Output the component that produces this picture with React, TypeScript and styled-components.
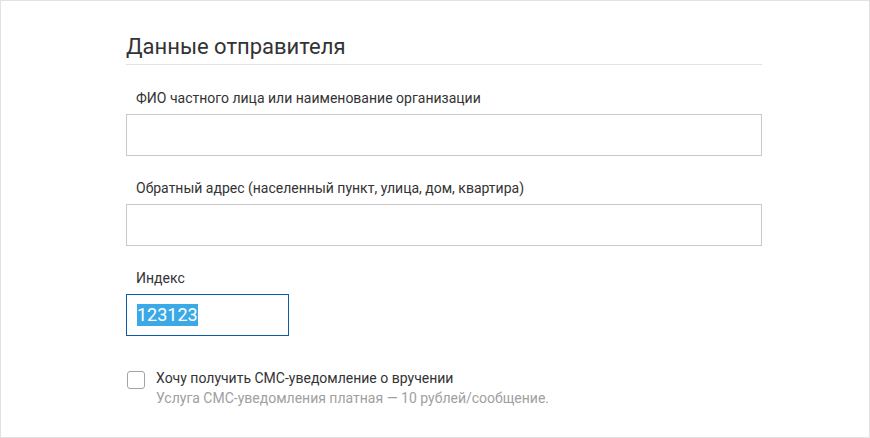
import React from "react";
import styled, { createGlobalStyle } from "styled-components";

const Global = createGlobalStyle`
  html, body { margin: 0; padding: 0; background: #fff; }
  * { box-sizing: border-box; }
  body { font-family: Roboto, "Noto Sans", Arial, sans-serif; color: #333; }
`;

const Frame = styled.div`
  width: 870px;
  height: 438px;
  border: 1px solid #e2e2e2;
  padding: 33px 107px 0 125px;
`;

const Column = styled.div`
  width: 636px;
  display: flex;
  flex-direction: column;
`;

const Heading = styled.h2`
  margin: 0;
  font-size: 22px;
  font-weight: 400;
  line-height: 26px;
  color: #333;
  padding-bottom: 4px;
  border-bottom: 1px solid #e3e3e3;
  margin-bottom: 23px;
`;

const Field = styled.div`
  display: flex;
  flex-direction: column;
  gap: 6px;
  margin-bottom: 22px;
`;

const Label = styled.label`
  font-size: 14px;
  line-height: 20px;
  color: #333;
  padding-left: 10px;
`;

const Input = styled.div<{ $width?: number; $focused?: boolean }>`
  width: ${(p) => (p.$width ? `${p.$width}px` : "100%")};
  height: 42px;
  border: 1px solid ${(p) => (p.$focused ? "#0d5aa7" : "#c9c9c9")};
  padding: 0 10px;
  display: flex;
  align-items: center;
  font-size: 18px;
  color: #333;
`;

const Selected = styled.span`
  background: #3aa9e6;
  color: #fff;
  line-height: 22px;
  display: inline-block;
`;

const CheckRow = styled.label`
  display: flex;
  align-items: flex-start;
  gap: 11px;
  margin-top: 10px;
  padding-left: 1px;
`;

const Box = styled.span`
  width: 18px;
  height: 18px;
  border: 1px solid #a3a3a3;
  border-radius: 3px;
  flex: none;
  margin-top: 3px;
`;

const CheckText = styled.div`
  display: flex;
  flex-direction: column;
  font-size: 14px;
  line-height: 20px;
`;

const Main = styled.span`
  color: #333;
`;

const Hint = styled.span`
  color: #a0a0a0;
`;

export default function App() {
  return (
    <>
      <Global />
      <Frame>
        <Column>
          <Heading>Данные отправителя</Heading>
          <Field>
            <Label>ФИО частного лица или наименование организации</Label>
            <Input />
          </Field>
          <Field>
            <Label>Обратный адрес (населенный пункт, улица, дом, квартира)</Label>
            <Input />
          </Field>
          <Field>
            <Label>Индекс</Label>
            <Input $width={163} $focused>
              <Selected>123123</Selected>
            </Input>
          </Field>
          <CheckRow>
            <Box />
            <CheckText>
              <Main>Хочу получить СМС-уведомление о вручении</Main>
              <Hint>Услуга СМС-уведомления платная — 10 рублей/сообщение.</Hint>
            </CheckText>
          </CheckRow>
        </Column>
      </Frame>
    </>
  );
}
